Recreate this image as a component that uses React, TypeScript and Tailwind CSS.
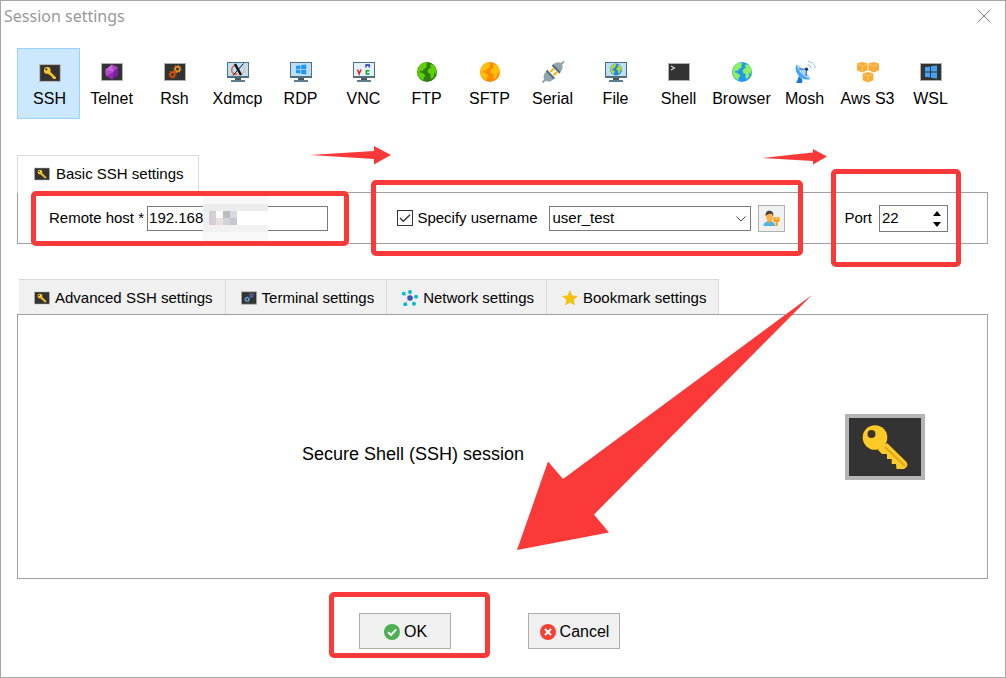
import { useState } from "react";
import type { ReactNode } from "react";

type IconProps = { children: ReactNode };

// Toolbar icons share a 25x24 canvas
function ToolIcon({ children }: IconProps) {
  return (
    <svg width="25" height="24" viewBox="0 0 25 24" className="shrink-0" aria-hidden="true">
      {children}
    </svg>
  );
}

// Tab icons reuse the same drawings at 16px
function TabIcon({ children }: IconProps) {
  return (
    <svg width="16" height="16" viewBox="2 1 22 22" className="shrink-0" aria-hidden="true">
      {children}
    </svg>
  );
}

function Terminal() {
  return <rect x="2.5" y="3.5" width="21" height="17" fill="#333333" stroke="#b0b0b0" />;
}

function Monitor({ screen = "#bbdefb" }: { screen?: string }) {
  return (
    <>
      <rect x="10" y="18" width="6" height="2" fill="#455a64" />
      <rect x="6" y="20" width="14" height="2" fill="#607d8b" />
      <rect x="2" y="2" width="22" height="16" fill="#546e7a" />
      <rect x="3" y="3" width="20" height="13" fill={screen} />
    </>
  );
}

function KeyArt() {
  return (
    <>
      <rect width="80" height="66" fill="#b5b5b5" />
      <rect x="4" y="4" width="72" height="58" fill="#333333" />
      <path
        d="M42 29 L61 47.5 Q63.5 50.5 61.5 53 L59 55 H51.5 L51 50 H46.7 V45 H42 V40 H37 L33 36 Z"
        fill="#ffc928"
      />
      <path d="M40 33 L60 52" stroke="#dba620" strokeWidth="2" />
      <circle cx="30" cy="23.5" r="12.3" fill="#ffc928" />
      <circle cx="26.5" cy="20" r="4" fill="#3a3525" />
    </>
  );
}

function SshArt() {
  return (
    <svg x="2" y="3" width="22" height="18" viewBox="0 0 80 66">
      <KeyArt />
    </svg>
  );
}

function Gear({ x, y, r, color }: { x: number; y: number; r: number; color: string }) {
  return (
    <>
      <circle cx={x} cy={y} r={r} fill="none" stroke={color} strokeWidth="1.4" />
      <circle
        cx={x}
        cy={y}
        r={r + 1.2}
        fill="none"
        stroke={color}
        strokeWidth="1.2"
        pathLength="16"
        strokeDasharray="1 1"
      />
    </>
  );
}

function GlobeArt({ sea, land }: { sea: string; land: string }) {
  return (
    <>
      <circle cx="13" cy="12" r="10" fill={sea} />
      <path
        d="M5 6.5 C7 3.8 9.5 2.6 12.3 2.4 L13.6 4 L12 5.2 L13 6.8 L11 8.4 L9.3 9.2 L9 11.2 L6.8 10.6 L5.6 12.2 L7.6 12.8 L10 14 L11.4 15.6 L10 17.4 L9.2 20.2 C5.6 18.2 3.3 15.4 3.4 11.2 Z"
        fill={land}
      />
      <path
        d="M16.2 4.4 L19.6 4.7 C21.4 6.6 22.6 9 22.5 11.6 L21.8 14 L20.4 12.6 L20 16.6 L17.6 19.2 L16.4 17 L16.6 14 L14.2 13 L13.6 10.6 L15.4 8.2 L17.6 8 L16 6.6 Z"
        fill={land}
      />
    </>
  );
}

function WindowsArt() {
  return (
    <path
      d="M8 6 L12.4 5.3 V9 H8 Z M13.2 5.1 L18.2 4.4 V9 H13.2 Z M8 9.8 H12.4 V13.6 L8 13 Z M13.2 9.8 H18.2 V14.5 L13.2 13.8 Z"
      fill="#2196f3"
    />
  );
}

function Cube({ x, y }: { x: number; y: number }) {
  return (
    <g transform={`translate(${x} ${y})`}>
      <path d="M5.3 0 L10.6 1.6 V8.2 L5.3 10.4 L0 8.2 V1.6 Z" fill="#fbaa33" />
      <path d="M1 2.5 L5.3 4 L9.6 2.5 M5.3 4 V9.6" fill="none" stroke="#ffdf9e" strokeWidth="0.6" />
    </g>
  );
}

function RshArt() {
  return (
    <>
      <Terminal />
      <Gear x={10.5} y={14.5} r={2.2} color="#e65100" />
      <Gear x={15.5} y={9} r={2.2} color="#f59a1b" />
    </>
  );
}

const sessions: { name: string; art: ReactNode }[] = [
  { name: "SSH", art: <SshArt /> },
  {
    name: "Telnet",
    art: (
      <>
        <Terminal />
        <path d="M13 4.6 L19 7.6 V15 L13 19.4 L7 16 L6 10 Z" fill="#9c27b0" />
        <path d="M13 4.6 L14.6 12 L6 10 Z" fill="#c868dc" />
        <path d="M6 10 L14.6 12 L7 16 Z" fill="#b04cc4" />
        <path d="M13 4.6 L19 7.6 L14.6 12 Z" fill="#ab47bc" />
        <path d="M14.6 12 L19 7.6 V15 L13 19.4 Z" fill="#7b1fa2" />
      </>
    ),
  },
  { name: "Rsh", art: <RshArt /> },
  {
    name: "Xdmcp",
    art: (
      <>
        <Monitor />
        <path d="M11.5 5 C5.5 6.5 4.5 13.5 12 14.5" fill="none" stroke="#ef6a35" strokeWidth="1.6" />
        <path d="M12 14.5 C19 15 21.5 9.5 18 6.5" fill="none" stroke="#f7b581" strokeWidth="1.4" />
        <path d="M10 4 L16 15" stroke="#111111" strokeWidth="2.4" />
        <path d="M18.5 3.5 L8 15.5" stroke="#111111" strokeWidth="1" />
      </>
    ),
  },
  {
    name: "RDP",
    art: (
      <>
        <Monitor />
        <WindowsArt />
      </>
    ),
  },
  {
    name: "VNC",
    art: (
      <>
        <Monitor screen="#e3f2fd" />
        <path d="M6.5 9.5 L8.2 14 L9.9 9.5" fill="none" stroke="#f01818" strokeWidth="1.5" />
        <path d="M15 7.5 V5 H18.2 V7.5" fill="none" stroke="#2222ee" strokeWidth="1.3" />
        <path d="M18.5 10.8 H15.4 V14 H18.5" fill="none" stroke="#15a515" strokeWidth="1.5" />
      </>
    ),
  },
  { name: "FTP", art: <GlobeArt sea="#2e7d0e" land="#5dd006" /> },
  { name: "SFTP", art: <GlobeArt sea="#ff8a00" land="#ffc107" /> },
  {
    name: "Serial",
    art: (
      <>
        <path d="M20.5 4.5 L24 1.5 M5.5 19.5 L2.5 22.5" stroke="#90a4ae" strokeWidth="2" />
        <path d="M12.5 5.5 C15 1.8 19 1.6 21.5 3.4 C23.4 6 23 10 19.5 12.5 Z" fill="#90a4ae" />
        <path d="M7 11 L14 18.5 C11.5 22 8 22.3 5 20.6 C2.5 18 3.3 13.5 7 11 Z" fill="#90a4ae" />
        <path d="M12.3 5 L20 12.8 M6.5 10.5 L14.3 18.6" stroke="#546e7a" strokeWidth="2" />
        <path d="M14 8.5 L10.4 12 M17.2 11.8 L13.8 15.2" stroke="#ffb300" strokeWidth="2" />
      </>
    ),
  },
  {
    name: "File",
    art: (
      <>
        <Monitor />
        <svg x="7" y="3" width="12" height="13" viewBox="3 2 20 20">
          <GlobeArt sea="#1e88e5" land="#b5d63a" />
        </svg>
      </>
    ),
  },
  {
    name: "Shell",
    art: (
      <>
        <Terminal />
        <path d="M5 6 L8.5 8 L5 10" fill="none" stroke="#e0e0e0" strokeWidth="1.1" />
      </>
    ),
  },
  { name: "Browser", art: <GlobeArt sea="#2196f3" land="#8cf25a" /> },
  {
    name: "Mosh",
    art: (
      <>
        <path d="M7 16 L10.5 19.5 L10 23 H4.2 Z" fill="#1976d2" />
        <path d="M4.5 4.5 C2.2 9 4.5 15 9.5 18 C12.5 19.6 16 20 18.5 19 Z" fill="#42a5f5" />
        <path d="M4.5 4.5 C9 6 16.5 13.5 18.5 19 C12 17.5 5.5 11 4.5 4.5 Z" fill="#a6d4fa" />
        <path d="M7 9 L14.5 9.2 L14 16" fill="none" stroke="#455a80" strokeWidth="1" />
        <circle cx="14.5" cy="9.3" r="1.7" fill="#0d3f94" />
        <path
          d="M15.5 4.8 C17.8 5 19 6.4 19.2 8.6 M16 1.6 C20.5 1.8 22.8 4.4 23.2 8.2"
          fill="none"
          stroke="#8cbfee"
          strokeWidth="1"
        />
      </>
    ),
  },
  {
    name: "Aws S3",
    art: (
      <>
        <Cube x={2} y={2} />
        <Cube x={13.4} y={2} />
        <Cube x={7.7} y={12} />
      </>
    ),
  },
  {
    name: "WSL",
    art: (
      <>
        <Terminal />
        <path
          d="M7 7.2 L12 6.4 V11.4 H7 Z M13 6.2 L19 5.4 V11.4 H13 Z M7 12.4 H12 V17.6 L7 16.8 Z M13 12.4 H19 V18.6 L13 17.8 Z"
          fill="#42a5f5"
        />
      </>
    ),
  },
];

const settingsTabs: { name: string; art: ReactNode }[] = [
  { name: "Advanced SSH settings", art: <SshArt /> },
  {
    name: "Terminal settings",
    art: (
      <>
        <Terminal />
        <Gear x={10.5} y={14} r={2.2} color="#64b5f6" />
        <Gear x={16.5} y={8.5} r={1.8} color="#5c6bc0" />
      </>
    ),
  },
  {
    name: "Network settings",
    art: (
      <>
        <path
          d="M13 12 L4.5 6.5 M13 12 V4 M13 12 L21.5 10.5 M13 12 L18.5 20 M13 12 L6.5 20.5"
          stroke="#a9c9dc"
          strokeWidth="1"
        />
        <circle cx="13" cy="12" r="3.8" fill="#3f51b5" />
        <circle cx="4.5" cy="6" r="2.7" fill="#00bcd4" />
        <circle cx="13" cy="3.7" r="2.7" fill="#00bcd4" />
        <circle cx="21.3" cy="10.3" r="2.7" fill="#00bcd4" />
        <circle cx="18.5" cy="20" r="2.7" fill="#00bcd4" />
        <circle cx="6.5" cy="20.5" r="2.7" fill="#00bcd4" />
      </>
    ),
  },
  {
    name: "Bookmark settings",
    art: (
      <path
        d="M13 1 L16.2 8.5 L24 9.2 L18 14.4 L19.9 22.4 L13 18.2 L6.1 22.4 L8 14.4 L2 9.2 L9.8 8.5 Z"
        fill="#f4c20d"
      />
    ),
  },
];

// Pixelated patch over the last part of the address
function Mosaic() {
  return (
    <div className="pointer-events-none absolute -top-[15px] left-[56px] w-[65px]">
      <div className="h-[13px] bg-[#f8f8f8]" />
      <div className="h-[7px] bg-[#ececec]" />
      <div className="flex h-[7px] bg-white">
        <div className="w-[6px] bg-[#edf2f6]" />
        <div className="w-[7px] bg-[#d5cfd5]" />
        <div className="w-[7px] bg-[#fafafa]" />
        <div className="w-[7px] bg-[#bdbbbb]" />
        <div className="w-[7px] bg-[#d3dbe2]" />
      </div>
      <div className="flex h-[7px] bg-white">
        <div className="w-[6px] bg-[#edf2f6]" />
        <div className="w-[7px] bg-[#d5cfd5]" />
        <div className="w-[7px] bg-[#e8e0da]" />
        <div className="w-[7px] bg-[#d0d4d8]" />
        <div className="w-[7px] bg-[#c6c6cc]" />
      </div>
      <div className="h-[7px] bg-[#f1f1f1]" />
      <div className="h-[10px] bg-[#f9f9f9]" />
    </div>
  );
}

function Arrows() {
  return (
    <svg
      width="1006"
      height="678"
      viewBox="0 0 1006 678"
      className="pointer-events-none absolute -top-px -left-px z-20"
      fill="#fc3939"
      aria-hidden="true"
    >
      <path d="M310 155 L374 151 V146 L391 155 L374 164.5 V159 Z" />
      <path d="M762 158 L813 152.5 V149 L827 156.5 L813 164.5 V161 Z" />
      <path d="M812 295 L563 479 L548 461.5 L517 550 L609 532.5 L594 514.5 Z" />
    </svg>
  );
}

export default function App() {
  const [session, setSession] = useState("SSH");
  const [useName, setUseName] = useState(true);
  const [port, setPort] = useState(22);

  return (
    <main className="relative flex min-h-screen flex-col border border-[#a5a5a5] bg-white font-['Liberation_Sans',Arial,sans-serif] text-[15px] leading-5 text-black">
      <header className="flex h-[47px] items-start justify-between pr-[14px] pl-[3px]">
        <h1 className="font-['Noto_Sans','Open_Sans',sans-serif] text-base leading-[30px] text-[#999999]">
          Session settings
        </h1>
        <button aria-label="Close" className="pt-2">
          <svg width="14" height="14" viewBox="0 0 14 14" stroke="#808080" fill="none">
            <path d="M1 1 L13 13 M13 1 L1 13" />
          </svg>
        </button>
      </header>

      <nav className="ml-4 flex">
        {sessions.map((s) => (
          <button
            key={s.name}
            onClick={() => setSession(s.name)}
            className={`flex h-[71px] w-[63px] flex-col items-center border text-base leading-5 whitespace-nowrap ${
              session === s.name
                ? "gap-1 border-[#99d1ff] bg-[#cce8ff] pt-3 pl-0.5"
                : "gap-[5px] border-transparent pt-[11px]"
            }`}
          >
            <ToolIcon>{s.art}</ToolIcon>
            {s.name}
          </button>
        ))}
      </nav>

      <section className="mt-9 mr-[17px] ml-4">
        <button className="relative z-10 -mb-px flex h-[38px] items-center gap-1.5 border border-b-0 border-[#d9d9d9] bg-white pr-[14px] pb-0.5 pl-4">
          <TabIcon>
            <SshArt />
          </TabIcon>
          Basic SSH settings
        </button>
        <div className="flex h-[52px] items-center border border-[#a0a0a0] pr-[39px] pl-[31px]">
          <div className="relative mr-[69px] flex flex-1 items-center gap-[3px]">
            <label htmlFor="host" className="whitespace-nowrap">
              Remote host *
            </label>
            <div className="relative flex flex-1">
              <input
                id="host"
                defaultValue="192.168"
                className="h-[25px] w-full min-w-0 border border-[#7a7a7a] px-px pb-0.5 outline-none"
              />
              <Mosaic />
            </div>
            <div className="pointer-events-none absolute -top-[15px] -right-[21px] -bottom-[15px] -left-[18px] z-20 rounded-[5px] border-5 border-[#fc3939]" />
          </div>

          <div className="relative mr-[59px] flex items-center">
            <label className="flex items-center gap-1 whitespace-nowrap">
              <span className="relative flex">
                <input
                  type="checkbox"
                  checked={useName}
                  onChange={(e) => setUseName(e.target.checked)}
                  className="h-4 w-4 appearance-none border border-[#333333] bg-white"
                />
                {useName && (
                  <svg width="16" height="16" viewBox="0 0 16 16" className="pointer-events-none absolute inset-0">
                    <path d="M3 8 L6.3 11.3 L13 4.7" fill="none" stroke="#333333" strokeWidth="1.3" />
                  </svg>
                )}
              </span>
              Specify username
            </label>
            <div className="relative ml-3">
              <select
                aria-label="Username"
                className="block h-[25px] w-[202px] appearance-none border border-[#7a7a7a] bg-white px-0.5 outline-none"
              >
                <option>user_test</option>
              </select>
              <svg
                width="10"
                height="6"
                viewBox="0 0 10 6"
                className="pointer-events-none absolute top-[10px] right-[5px]"
              >
                <path d="M0.5 0.5 L5 5 L9.5 0.5" fill="none" stroke="#444444" />
              </svg>
            </div>
            <button
              aria-label="Manage users"
              className="ml-[7px] flex h-[27px] w-[27px] items-center justify-center border border-[#b0b0b0] bg-[#f0f0f0]"
            >
              <svg width="17" height="17" viewBox="0 0 17 17">
                <path d="M0.5 16 C0.5 12.5 3 11.5 6.5 11 C10 11.5 12 12.5 12 16 Z" fill="#4fb3f0" />
                <path d="M4.5 9 H8.5 V12 L6.5 13.5 L4.5 12 Z" fill="#f09a2c" />
                <ellipse cx="6.5" cy="6.8" rx="3.4" ry="4.3" fill="#ffb14d" />
                <path
                  d="M2.8 6.5 C2 2.8 3.8 0.8 6.6 0.8 C9.6 0.8 10.8 3 10.2 6.5 C9.6 5.5 9.4 4.4 8.6 3.6 C6.5 4.3 3.9 3.8 2.8 6.5 Z"
                  fill="#424242"
                />
                <path d="M10.4 7.2 H16.6 V11.4 L14.8 12 V16 H12.6 V12 L10.4 11.4 Z" fill="#fb9f0c" />
                <path d="M12.4 8.8 H14.8" stroke="#fff3d8" strokeWidth="1" />
              </svg>
            </button>
            <div className="pointer-events-none absolute -top-[25px] -right-[18px] -bottom-6 -left-[26px] z-20 rounded-[5px] border-5 border-[#fc3939]" />
          </div>

          <div className="relative flex items-center gap-[7px]">
            <label htmlFor="port">Port</label>
            <div className="relative">
              <input
                id="port"
                inputMode="numeric"
                value={port}
                onChange={(e) => setPort(Number(e.target.value) || 0)}
                className="block h-[27px] w-[69px] border border-[#7a7a7a] px-0.5 pb-0.5 outline-none"
              />
              <div className="absolute top-[5px] right-[7px] flex flex-col gap-1">
                <button aria-label="Increase port" onClick={() => setPort(port + 1)} className="h-[7px]">
                  <svg width="8" height="5" viewBox="0 0 8 5" className="block">
                    <path d="M4 0 L8 5 H0 Z" />
                  </svg>
                </button>
                <button aria-label="Decrease port" onClick={() => setPort(port - 1)} className="h-[7px]">
                  <svg width="8" height="5" viewBox="0 0 8 5" className="block">
                    <path d="M0 0 H8 L4 5 Z" />
                  </svg>
                </button>
              </div>
            </div>
            <div className="pointer-events-none absolute -inset-x-[13px] -top-9 -bottom-[35px] z-20 rounded-[5px] border-5 border-[#fc3939]" />
          </div>
        </div>
      </section>

      <section className="mt-[35px] mr-[17px] ml-4 flex flex-1 flex-col">
        <div className="ml-0.5 flex">
          {settingsTabs.map((t) => (
            <button
              key={t.name}
              className="flex h-[35px] items-center gap-[5px] border-t border-r border-[#d9d9d9] bg-[#f0f0f0] pt-px pr-3 pl-[15px] whitespace-nowrap"
            >
              <TabIcon>{t.art}</TabIcon>
              {t.name}
            </button>
          ))}
        </div>
        <div className="flex flex-1 items-center border border-[#a0a0a0]">
          <p className="flex-1 pt-[14px] text-center text-lg leading-6">Secure Shell (SSH) session</p>
          <svg width="80" height="66" viewBox="0 0 80 66" className="mr-[62px] ml-[37px] shrink-0" aria-hidden="true">
            <KeyArt />
          </svg>
        </div>
      </section>

      <footer className="flex justify-center gap-[77px] pt-[34px] pr-[27px] pb-7 text-base">
        <div className="relative">
          <button className="flex h-9 w-[92px] items-center justify-center gap-1 border border-[#adadad] bg-[#f0f0f0] pt-px pl-px">
            <svg width="16" height="16" viewBox="0 0 16 16">
              <circle cx="8" cy="8" r="8" fill="#4caf50" />
              <path d="M4.2 8.2 L7 11 L12.2 5.4" fill="none" stroke="#ffffff" strokeWidth="2" />
            </svg>
            OK
          </button>
          <div className="pointer-events-none absolute -top-[21px] -right-[39px] -bottom-[9px] -left-[30px] rounded-[5px] border-5 border-[#fc3939]" />
        </div>
        <button className="flex h-9 w-[92px] items-center justify-center gap-1 border border-[#adadad] bg-[#f0f0f0] pt-px pl-px">
          <svg width="16" height="16" viewBox="0 0 16 16">
            <circle cx="8" cy="8" r="8" fill="#f44336" />
            <path d="M5 5 L11 11 M11 5 L5 11" stroke="#ffffff" strokeWidth="2" />
          </svg>
          Cancel
        </button>
      </footer>
      <Arrows />
    </main>
  );
}
